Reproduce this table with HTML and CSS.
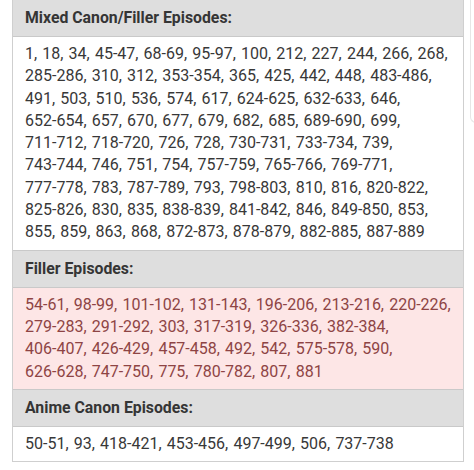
FILE: index.html
```html
<!DOCTYPE html>
<html>
<head>
<meta charset="utf-8">
<link rel="stylesheet" href="styles.css">
</head>
<body>
<div class="page">
  <div class="table">
    <div class="head">Mixed Canon/Filler Episodes:</div>
    <div class="cell">1, 18, 34, 45-47, 68-69, 95-97, 100, 212, 227, 244, 266, 268,<br>285-286, 310, 312, 353-354, 365, 425, 442, 448, 483-486,<br>491, 503, 510, 536, 574, 617, 624-625, 632-633, 646,<br>652-654, 657, 670, 677, 679, 682, 685, 689-690, 699,<br>711-712, 718-720, 726, 728, 730-731, 733-734, 739,<br>743-744, 746, 751, 754, 757-759, 765-766, 769-771,<br>777-778, 783, 787-789, 793, 798-803, 810, 816, 820-822,<br>825-826, 830, 835, 838-839, 841-842, 846, 849-850, 853,<br>855, 859, 863, 868, 872-873, 878-879, 882-885, 887-889</div>
    <div class="head">Filler Episodes:</div>
    <div class="cell filler">54-61, 98-99, 101-102, 131-143, 196-206, 213-216, 220-226,<br>279-283, 291-292, 303, 317-319, 326-336, 382-384,<br>406-407, 426-429, 457-458, 492, 542, 575-578, 590,<br>626-628, 747-750, 775, 780-782, 807, 881</div>
    <div class="head">Anime Canon Episodes:</div>
    <div class="cell">50-51, 93, 418-421, 453-456, 497-499, 506, 737-738</div>
  </div>
  <div class="side"></div>
</div>
</body>
</html>
```
FILE: styles.css
```css
html, body {
  margin: 0;
  padding: 0;
  background: #ffffff;
}
.page {
  position: relative;
  width: 474px;
  height: 470px;
  overflow: hidden;
  font-family: Roboto, "Noto Sans", sans-serif;
}
.table {
  margin-left: 12px;
  width: 450px;
  border-left: 1px solid #cfcfcf;
  border-right: 1px solid #cfcfcf;
  border-bottom: 1px solid #cfcfcf;
}
.head {
  background: #dedede;
  color: #353535;
  font-weight: bold;
  font-size: 15.8px;
  height: 36px;
  line-height: 36px;
  padding: 0 12px;
  border-bottom: 1px solid #c9c9c9;
  border-top: 1px solid #c9c9c9;
}
.head:first-child {
  border-top: none;
}
.cell {
  background: #ffffff;
  color: #383838;
  font-size: 16px;
  word-spacing: 1.2px;
  line-height: 22.3px;
  padding: 6px 12px;
  white-space: nowrap;
}
.filler {
  background: #fde6e6;
  color: #8e4444;
}
.side {
  position: absolute;
  left: 470px;
  top: -10px;
  width: 20px;
  height: 132px;
  border-left: 1px solid #e6e6e6;
  border-bottom: 1px solid #e6e6e6;
  border-bottom-left-radius: 6px;
}
```
